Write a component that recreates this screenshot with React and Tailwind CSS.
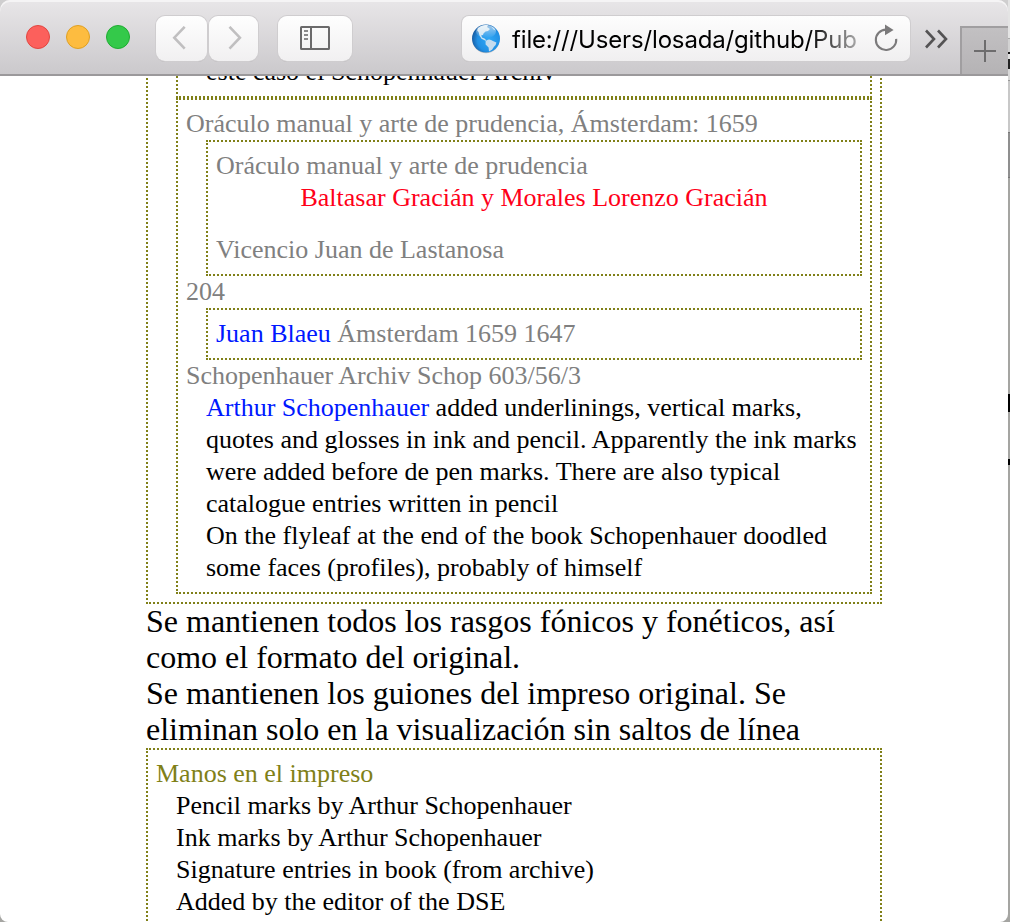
const Box = ({ className = "", children }) => (
  <div className={`border-2 border-dotted border-[#808018] ${className}`}>{children}</div>
);

const Line = ({ className = "", children }) => (
  <div className={`h-8 whitespace-nowrap ${className}`}>{children}</div>
);

const BigLine = ({ children }) => <div className="h-9 whitespace-nowrap">{children}</div>;

const button =
  "flex h-[45px] items-center justify-center rounded-[9px] bg-linear-to-b from-[#fefefe] to-[#f1f0f1] shadow-[0_0_0_1px_#cfcdcf,0_1px_0_0_#b2b0b2]";

function Globe() {
  return (
    <svg width="30" height="30" viewBox="0 0 30 30">
      <defs>
        <radialGradient id="sea" cx="0.6" cy="0.55" r="0.62">
          <stop offset="0" stopColor="#30a8f6" />
          <stop offset="0.65" stopColor="#2290e4" />
          <stop offset="1" stopColor="#17599f" />
        </radialGradient>
        <linearGradient id="shine" x1="0" y1="0" x2="0" y2="1">
          <stop offset="0" stopColor="#fff" stopOpacity="0.6" />
          <stop offset="1" stopColor="#fff" stopOpacity="0" />
        </linearGradient>
      </defs>
      <ellipse cx="15" cy="15.8" rx="13.6" ry="13.5" fill="#000" opacity="0.2" />
      <circle cx="15" cy="14.6" r="14" fill="url(#sea)" />
      <path
        d="M7 4 Q10 1.6 14 1 L17 1 L16 3 L19 5 L17 7 L14.5 7.6 L12.5 9.6 L12 11 L10.2 11.2 L11 13.4 L13.5 14.6 L15.5 16.4 L14.6 16.8 L10.5 14.8 L8.5 11.5 L7.6 8 L6.2 6.4 Z"
        fill="#cfe4f2"
      />
      <path
        d="M14.6 17.2 Q17 14.8 20 16 L22.5 17.2 L25.4 18.4 Q25.2 21 23 22.8 L21 25.8 L18 27.6 L17.6 23.6 L14.6 20.4 Z"
        fill="#c6dcee"
      />
      <path d="M20 2.2 L23 4 L25 6.8 L22.5 5.5 Z" fill="#a9d3ef" />
      <ellipse cx="15" cy="7.6" rx="10" ry="6.5" fill="url(#shine)" />
    </svg>
  );
}

function Toolbar() {
  return (
    <header className="flex h-[76px] w-[1008px] items-start rounded-tr-[10px] rounded-tl-[10px] border-b-2 border-[#9b999b] bg-linear-to-b from-[#e8e6e8] to-[#cbc9cc] shadow-[inset_0_2px_0_#f5f4f5]">
      <div className="mt-[25px] ml-[26px] flex gap-4">
        <span className="size-6 rounded-full border border-[#e14640] bg-[#fc605c]" />
        <span className="size-6 rounded-full border border-[#dfa023] bg-[#fdbc40]" />
        <span className="size-6 rounded-full border border-[#1fac31] bg-[#34c94a]" />
      </div>
      <div className="mt-4 ml-[26px] flex gap-[2px]">
        <div className={`${button} w-[51px]`}>
          <svg width="20" height="26" viewBox="0 0 20 26" fill="none" stroke="#c0bfc0" strokeWidth="2.6">
            <path d="M12.7 0.8 L2.3 11.7 L12.7 22.6" />
          </svg>
        </div>
        <div className={`${button} w-[49px]`}>
          <svg width="20" height="26" viewBox="0 0 20 26" fill="none" stroke="#c0bfc0" strokeWidth="2.6">
            <path d="M5.5 0.8 L15.9 11.7 L5.5 22.6" />
          </svg>
        </div>
      </div>
      <div className={`${button} mt-4 ml-5 w-[74px]`}>
        <svg className="-mt-px" width="30" height="24" viewBox="0 0 30 24" fill="none" stroke="#6b6a6b" strokeWidth="2">
          <rect x="1" y="1" width="28" height="22" rx="0.5" />
          <path d="M11 1 V23" />
          <path d="M4 5 H8 M4 9 H8 M4 13 H8" stroke="#8b8a8b" />
        </svg>
      </div>
      <div className="mt-4 ml-[110px] flex h-[45px] w-[448px] items-center rounded-[7px] bg-linear-to-b from-[#fdfdfd] to-[#f0eff0] shadow-[0_0_0_1px_#cfcdcf,0_1px_0_0_#b2b0b2]">
        <div className="ml-[9px]">
          <Globe />
        </div>
        <div className="mt-[2px] ml-[11px] w-[346px] mask-[linear-gradient(to_right,#000_296px,rgba(0,0,0,0.3)_346px)] font-['Inter',sans-serif] text-[24px] leading-[34px] tracking-[-0.16px] whitespace-nowrap text-black">
          file:///Users/losada/github/Pub
        </div>
        <svg className="ml-[15px]" width="26" height="30" viewBox="0 0 26 30">
          <path d="M13 5.6 A10.2 10.2 0 1 0 23.2 14.8" fill="none" stroke="#7b7a7b" strokeWidth="2.1" />
          <path d="M12 0.5 L20.6 6 L12 11.2 Z" fill="#7b7a7b" />
        </svg>
      </div>
      <svg className="mt-[29px] ml-[14px]" width="26" height="20" viewBox="0 0 26 20" fill="none" stroke="#545354" strokeWidth="2.6">
        <path d="M2 1.5 L10 10 L2 18.5 M14 1.5 L22 10 L14 18.5" />
      </svg>
      <div className="mt-[26px] ml-auto flex h-12 w-12 items-center justify-center border-t-2 border-l-2 border-[#a09ea0] bg-linear-to-b from-[#c2c0c2] to-[#b5b3b5]">
        <svg width="22" height="22" viewBox="0 0 22 22" stroke="#6d6c6d" strokeWidth="2">
          <path d="M0 11 H22 M11 0 V22" />
        </svg>
      </div>
    </header>
  );
}

function Page() {
  return (
    <main className="h-[846px] w-[1008px] overflow-hidden rounded-b-[8px] bg-white font-['Liberation_Serif',serif] text-[26px] leading-8 text-black">
      <div className="-mt-[30px] ml-[146px] w-[736px]">
        <Box className="p-2">
          <div className="ml-5">
            <Box className="border-t-0 p-2 pt-0">
              <Line className="ml-5">este caso el Schopenhauer Archiv</Line>
            </Box>
            <Box className="p-2 text-[#808080]">
              <Line>Oráculo manual y arte de prudencia, Ámsterdam: 1659</Line>
              <Box className="ml-5 p-2">
                <Line>Oráculo manual y arte de prudencia</Line>
                <Line className="text-center text-[#ff0019]">Baltasar Gracián y Morales Lorenzo Gracián</Line>
                <Line className="mt-5">Vicencio Juan de Lastanosa</Line>
              </Box>
              <Line>204</Line>
              <Box className="ml-5 p-2">
                <Line>
                  <span className="text-[#0018ff]">Juan Blaeu</span> Ámsterdam 1659 1647
                </Line>
              </Box>
              <Line>Schopenhauer Archiv Schop 603/56/3</Line>
              <div className="ml-5 text-black">
                <Line>
                  <span className="text-[#0018ff]">Arthur Schopenhauer</span> added underlinings, vertical marks,
                </Line>
                <Line>quotes and glosses in ink and pencil. Apparently the ink marks</Line>
                <Line>were added before de pen marks. There are also typical</Line>
                <Line>catalogue entries written in pencil</Line>
                <Line>On the flyleaf at the end of the book Schopenhauer doodled</Line>
                <Line>some faces (profiles), probably of himself</Line>
              </div>
            </Box>
          </div>
        </Box>
        <div className="text-[32px] leading-[34px]">
          <BigLine>Se mantienen todos los rasgos fónicos y fonéticos, así</BigLine>
          <BigLine>como el formato del original.</BigLine>
          <BigLine>Se mantienen los guiones del impreso original. Se</BigLine>
          <BigLine>eliminan solo en la visualización sin saltos de línea</BigLine>
        </div>
        <Box className="p-2 pb-10">
          <Line className="text-[#808018]">Manos en el impreso</Line>
          <div className="ml-5">
            <Line>Pencil marks by Arthur Schopenhauer</Line>
            <Line>Ink marks by Arthur Schopenhauer</Line>
            <Line>Signature entries in book (from archive)</Line>
            <Line>Added by the editor of the DSE</Line>
          </div>
        </Box>
      </div>
    </main>
  );
}

function WindowBehind() {
  return (
    <div className="flex w-[2px] flex-col bg-[#a5a5a2]">
      <div className="h-[38px] bg-[#e4e4e4]" />
      <div className="h-[14px] border-t border-[#aaa] bg-[#d2d2d2]" />
      <div className="h-[2px] bg-[#111]" />
      <div className="h-[5px] bg-[#e0e0e0]" />
      <div className="h-[10px] bg-[#222]" />
      <div className="h-[12px] border-b border-[#999] bg-[#d8d8d8]" />
      <div className="h-[51px] bg-[#c8c8c8]" />
      <div className="h-[46px] border-y border-[#777] bg-[#8f8f8f]" />
      <div className="mt-[216px] h-[18px] bg-black" />
      <div className="mt-[47px] h-[6px] bg-black" />
    </div>
  );
}

export default function App() {
  return (
    <div className="flex h-[922px] w-[1010px] overflow-hidden bg-[#a5a5a2]">
      <div className="w-[1008px] bg-linear-to-b from-[#cfcecf] to-[#a5a5a2]">
        <Toolbar />
        <Page />
      </div>
      <WindowBehind />
    </div>
  );
}
